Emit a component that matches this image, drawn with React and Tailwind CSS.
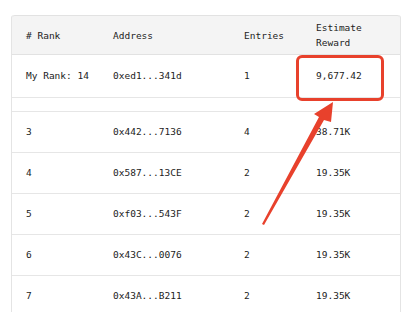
export default function App() {
  const rows = [
    { rank: '3', address: '0x442...7136', entries: '4', reward: '38.71K' },
    { rank: '4', address: '0x587...13CE', entries: '2', reward: '19.35K' },
    { rank: '5', address: '0xf03...543F', entries: '2', reward: '19.35K' },
    { rank: '6', address: '0x43C...0076', entries: '2', reward: '19.35K' },
    { rank: '7', address: '0x43A...B211', entries: '2', reward: '19.35K' },
  ]

  const cols = 'grid grid-cols-[87px_131px_72px_1fr] items-center'

  return (
    <div className="relative w-[411px] h-[312px] overflow-hidden bg-white pt-[15px] pl-[11px] pr-[10px] font-['DejaVu_Sans_Mono',monospace] text-[9.5px] text-[#1c1c1c]">
      <div className="border-x border-[#e4e4e4] rounded-t-[3px]">
        {/* Header */}
        <div className={`${cols} h-[40px] bg-[#f4f4f4] border-t border-b border-[#e2e2e2] rounded-t-[3px] leading-[15px]`}>
          <div className="pl-[14px]"># Rank</div>
          <div className="pl-[14px]">Address</div>
          <div className="pl-[14px]">Entries</div>
          <div className="pl-[14px]">Estimate<br />Reward</div>
        </div>

        {/* My rank */}
        <div className={`${cols} h-[43px] border-b border-[#e6e6e6]`}>
          <div className="pl-[14px]">My Rank: 14</div>
          <div className="pl-[14px]">0xed1...341d</div>
          <div className="pl-[14px]">1</div>
          <div className="pl-[14px]">9,677.42</div>
        </div>

        {/* Spacer */}
        <div className="h-[14px] border-b border-[#e6e6e6]" />

        {rows.map((r) => (
          <div key={r.rank} className={`${cols} h-[41px] border-b border-[#e6e6e6]`}>
            <div className="pl-[14px]">{r.rank}</div>
            <div className="pl-[14px]">{r.address}</div>
            <div className="pl-[14px]">{r.entries}</div>
            <div className="pl-[14px]">{r.reward}</div>
          </div>
        ))}
      </div>

      {/* Highlight box */}
      <div className="absolute left-[296px] top-[55px] w-[88px] h-[46px] border-[3px] border-[#e8412c] rounded-[6px]" />

      {/* Arrow */}
      <svg className="absolute left-0 top-0" width="411" height="312" viewBox="0 0 411 312">
        <polygon
          points="333,102 314,114 319,117 262,224 264,225 324,120 331,122"
          fill="#e8412c"
        />
      </svg>
    </div>
  )
}
